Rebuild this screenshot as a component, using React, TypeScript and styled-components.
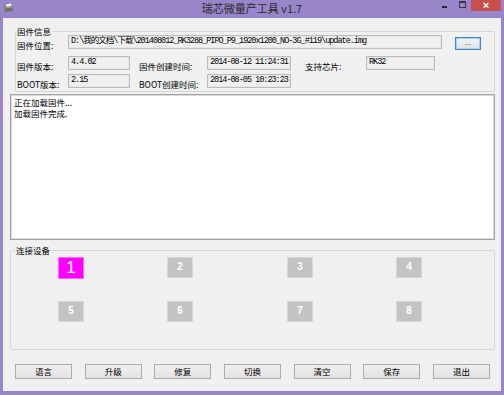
import styled, { createGlobalStyle } from "styled-components";

const GlobalStyle = createGlobalStyle`
  html, body {
    margin: 0;
    padding: 0;
    background: #ffffff;
  }
  body {
    font-family: "Noto Sans CJK SC", "Liberation Sans", sans-serif;
  }
`;

const firmwareRows = [
  { label: "固件版本:", value: "4.4.02" },
  { label: "BOOT版本:", value: "2.15" },
];

const devices = [1, 2, 3, 4, 5, 6, 7, 8];
const actions = ["语言", "升级", "修复", "切换", "清空", "保存", "退出"];

function AppIcon() {
  return (
    <svg width="11" height="11" viewBox="0 0 11 11">
      <path d="M1 3 L5 1 L10 2 L10 9 L2 10 Z" fill="#8d8d8d" />
      <path d="M3 2.5 L8 1.5 L9 6 L4 7 Z" fill="#f4f4f4" />
      <path d="M1 5 L9 4 L10 9 L2 10 Z" fill="#6f6f6f" />
      <path d="M1.5 6 L9 5" stroke="#b5b5b5" strokeWidth="0.8" />
    </svg>
  );
}

export default function App() {
  return (
    <>
      <GlobalStyle />
      <StWindow>
        <StTitleBar>
          <StTitleLeft>
            <AppIcon />
          </StTitleLeft>
          <StTitleText>瑞芯微量产工具 v1.7</StTitleText>
          <StTitleControls>
            <StCaptionButton $width={18}>
              <StMinGlyph />
            </StCaptionButton>
            <StCaptionButton $width={18}>
              <StMaxGlyph />
            </StCaptionButton>
            <StCloseButton>×</StCloseButton>
          </StTitleControls>
        </StTitleBar>

        <StClient>
          <StFirmwareBox>
            <StGroupTitle $left={0}>固件信息</StGroupTitle>
            <StRow $top={0}>
              <StLabel $width={51}>固件位置:</StLabel>
              <StField $width={374}>
                D:\我的文档\下载\201408012_RK3288_PIPO_P9_1920x1200_NO-3G_#119\update.img
              </StField>
              <StBrowseButton>...</StBrowseButton>
            </StRow>
            <StRow $top={6}>
              <StLabel $width={51}>{firmwareRows[0].label}</StLabel>
              <StField $width={62}>{firmwareRows[0].value}</StField>
              <StLabel $width={68} $gap={9}>
                固件创建时间:
              </StLabel>
              <StField $width={84}>2014-08-12 11:24:31</StField>
              <StLabel $width={61} $gap={14}>
                支持芯片:
              </StLabel>
              <StField $width={69}>RK32</StField>
            </StRow>
            <StRow $top={3}>
              <StLabel $width={51}>{firmwareRows[1].label}</StLabel>
              <StField $width={62}>{firmwareRows[1].value}</StField>
              <StLabel $width={68} $gap={9}>
                BOOT创建时间:
              </StLabel>
              <StField $width={84}>2014-08-05 10:23:23</StField>
            </StRow>
          </StFirmwareBox>

          <StLog>
            <div>正在加载固件...</div>
            <div>加载固件完成.</div>
          </StLog>

          <StDeviceBox>
            <StGroupTitle $left={4}>连接设备</StGroupTitle>
            <StDeviceGrid>
              {devices.map((n) => (
                <StDevice key={n} $active={n === 1}>
                  {n}
                </StDevice>
              ))}
            </StDeviceGrid>
          </StDeviceBox>

          <StActionBar>
            {actions.map((a) => (
              <StActionButton key={a}>{a}</StActionButton>
            ))}
          </StActionBar>
        </StClient>
      </StWindow>
    </>
  );
}

const StWindow = styled.div`
  width: 504px;
  height: 395px;
  box-sizing: border-box;
  background: #9985c9;
  padding: 0 3px 4px 3px;
  display: flex;
  flex-direction: column;
`;

const StTitleBar = styled.div`
  height: 18px;
  flex: none;
  display: grid;
  grid-template-columns: 1fr auto 1fr;
  align-items: start;
`;

const StTitleLeft = styled.div`
  display: flex;
  padding-top: 2px;
`;

const StTitleText = styled.div`
  font-size: 11px;
  line-height: 16px;
  color: #2b2b2b;
  white-space: nowrap;
`;

const StTitleControls = styled.div`
  display: flex;
  justify-content: flex-end;
  align-items: flex-start;
`;

const StCaptionButton = styled.div<{ $width: number }>`
  width: ${(p) => p.$width}px;
  height: 11px;
  display: flex;
  align-items: center;
  justify-content: center;
`;

const StMinGlyph = styled.div`
  width: 5px;
  height: 2px;
  margin-top: 2px;
  background: #2a2a2a;
`;

const StMaxGlyph = styled.div`
  width: 5px;
  height: 4px;
  margin-top: -2px;
  border: 1px solid #3a3a3a;
  border-top-width: 2px;
`;

const StCloseButton = styled.div`
  width: 30px;
  height: 11px;
  background: #c7504c;
  color: #ffffff;
  font-family: "Liberation Sans", sans-serif;
  font-weight: bold;
  font-size: 11px;
  line-height: 10px;
  text-align: center;
`;

const StClient = styled.div`
  flex: 1;
  background: #f0f0f0;
  padding: 0 6px 0 7px;
  display: flex;
  flex-direction: column;
`;

const StGroupBox = styled.div`
  position: relative;
  box-sizing: border-box;
  border: 1px solid #d6d6d6;
  border-radius: 2px;
`;

const StFirmwareBox = styled(StGroupBox)`
  margin: 13px 0 0 5px;
  height: 61px;
  padding: 3px 0 0 1px;
`;

const StGroupTitle = styled.span<{ $left: number }>`
  position: absolute;
  top: -6px;
  left: ${(p) => p.$left}px;
  padding: 0 1px;
  background: #f0f0f0;
  font-size: 8.5px;
  line-height: 11px;
  color: #000000;
`;

const StRow = styled.div<{ $top: number }>`
  display: flex;
  align-items: flex-start;
  margin-top: ${(p) => p.$top}px;
`;

const StLabel = styled.div<{ $width: number; $gap?: number }>`
  width: ${(p) => p.$width}px;
  margin-left: ${(p) => p.$gap ?? 0}px;
  padding-top: 5px;
  font-size: 8.5px;
  line-height: 10px;
  color: #000000;
  white-space: nowrap;
`;

const StField = styled.div<{ $width: number }>`
  width: ${(p) => p.$width}px;
  height: 14px;
  box-sizing: border-box;
  border: 1px solid #bcbcbc;
  box-shadow: inset 0 0 0 1px #e6e6e6;
  background: #f0f0f0;
  padding: 0 1px 0 2px;
  font-family: "Liberation Mono", "Noto Sans CJK SC", monospace;
  font-size: 8.5px;
  letter-spacing: -1px;
  line-height: 11px;
  color: #000000;
  white-space: nowrap;
  overflow: hidden;
`;

const StBrowseButton = styled.div`
  width: 26px;
  height: 13px;
  margin: 2px 0 0 13px;
  box-sizing: border-box;
  border: 1px solid #3c86c9;
  box-shadow: inset 0 0 0 1px #a9d2f2;
  background: linear-gradient(#f2f2f2, #e3e3e3);
  font-family: "Liberation Sans", sans-serif;
  font-size: 8px;
  line-height: 10px;
  text-align: center;
  color: #333333;
`;

const StLog = styled.div`
  margin-top: 2px;
  height: 146px;
  box-sizing: border-box;
  border: 1px solid #a3a3a3;
  box-shadow: inset 0 0 0 1px #d9d9d9;
  background: #ffffff;
  padding: 2px 3px;
  font-size: 8.5px;
  line-height: 11px;
  color: #000000;
`;

const StDeviceBox = styled(StGroupBox)`
  margin-top: 10px;
  height: 100px;
  padding: 6px 0 0 47px;
`;

const StDeviceGrid = styled.div`
  display: grid;
  grid-template-columns: 109px 120px 109px 26px;
  grid-auto-rows: 21px;
  row-gap: 23px;
`;

const StDevice = styled.div<{ $active: boolean }>`
  width: 26px;
  height: ${(p) => (p.$active ? 22 : 21)}px;
  box-sizing: border-box;
  border: 1px solid ${(p) => (p.$active ? "#ff66ff" : "#d6d6d6")};
  background: ${(p) => (p.$active ? "#ff00ff" : "#c3c3c3")};
  color: #ffffff;
  font-family: "Liberation Sans", sans-serif;
  font-weight: ${(p) => (p.$active ? "normal" : "bold")};
  font-size: ${(p) => (p.$active ? 17 : 10)}px;
  line-height: ${(p) => (p.$active ? 20 : 18)}px;
  text-align: center;
`;

const StActionBar = styled.div`
  margin-top: 14px;
  padding: 0 5px;
  display: flex;
  justify-content: space-between;
`;

const StActionButton = styled.div`
  width: 57px;
  height: 15px;
  box-sizing: border-box;
  border: 1px solid #acacac;
  background: linear-gradient(#f0f0f0, #e2e2e2);
  font-size: 8.5px;
  line-height: 13px;
  text-align: center;
  color: #000000;
`;
